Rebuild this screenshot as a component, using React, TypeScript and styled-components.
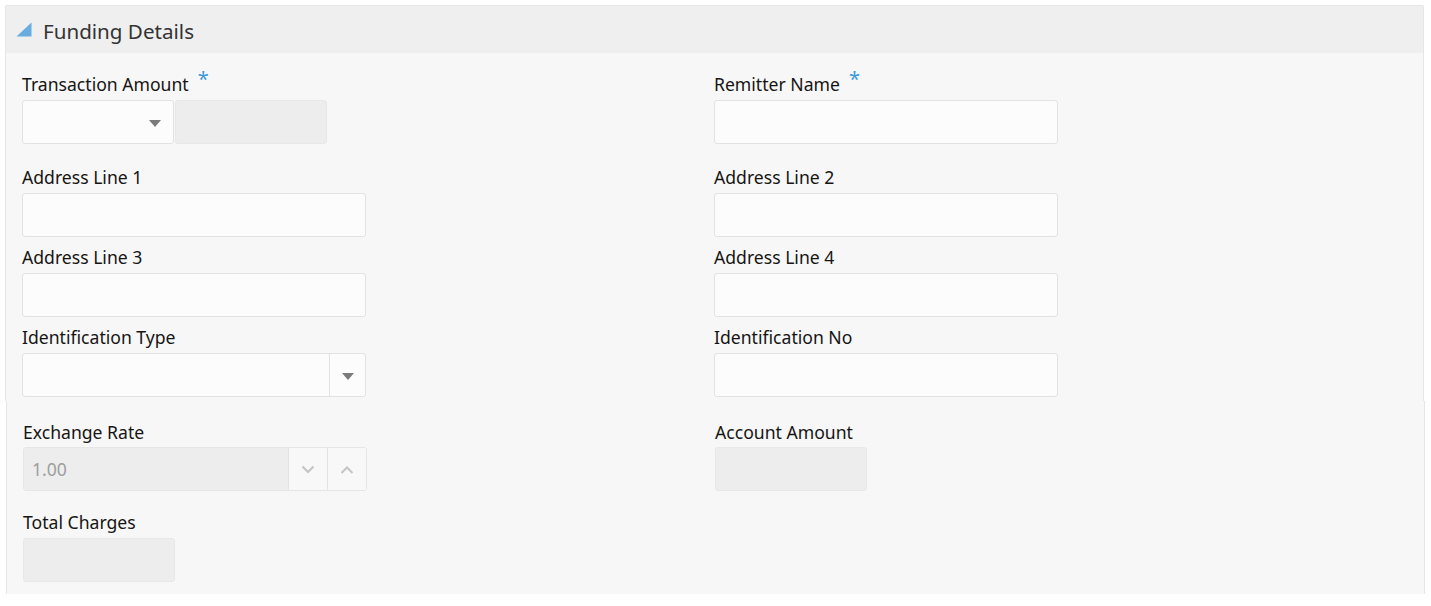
import React from "react";
import styled, { createGlobalStyle } from "styled-components";

const Global = createGlobalStyle`
  html, body { margin: 0; padding: 0; background: #ffffff; }
  body { font-family: "Noto Sans", "Open Sans", sans-serif; color: #161513; }
  * { box-sizing: border-box; }
`;

const Page = styled.div`
  padding: 5px 0 0 5px;
  width: 1431px;
`;

const Panel = styled.section`
  width: 1419px;
  border: 1px solid #e6e6e6;
  border-bottom: none;
  border-radius: 2px 2px 0 0;
  background: #f7f7f7;
`;

const Header = styled.div`
  height: 47px;
  background: #efefef;
  display: flex;
  align-items: center;
  padding-left: 11px;
  gap: 11px;
`;

const Title = styled.h2`
  margin: 0;
  font-size: 20.6px;
  font-weight: 400;
  color: #333333;
  line-height: 24px;
  margin-top: 2px;
`;

const Body = styled.div`
  padding: 20px 0 4px 16px;
`;

const Lower = styled.section`
  width: 1419px;
  margin-left: 1px;
  border-left: 1px solid #e6e6e6;
  border-right: 1px solid #e6e6e6;
  background: #f7f7f7;
  padding: 20px 0 12px 16px;
`;

const Row = styled.div<{ $after: number }>`
  display: grid;
  grid-template-columns: 692px 692px;
  margin-bottom: ${(p) => p.$after}px;
`;

const Field = styled.div`
  display: flex;
  flex-direction: column;
`;

const Label = styled.label<{ $gap?: number }>`
  font-size: 17.6px;
  line-height: 20px;
  height: 20px;
  margin-top: 1px;
  margin-bottom: ${(p) => p.$gap ?? 6}px;
  white-space: nowrap;
  display: flex;
  align-items: flex-start;
`;

const Required = styled.span`
  color: #3a9ad9;
  font-size: 20px;
  line-height: 16px;
  margin-left: 9px;
  margin-top: -3px;
`;

const Input = styled.div<{ $w: number; $disabled?: boolean }>`
  width: ${(p) => p.$w}px;
  height: 44px;
  border: 1px solid ${(p) => (p.$disabled ? "#e8e8e8" : "#e2e2e2")};
  border-radius: 3px;
  background: ${(p) => (p.$disabled ? "#ededed" : "#fcfcfc")};
`;

const Group = styled.div`
  display: flex;
  gap: 1px;
`;

const Select = styled.div<{ $w: number }>`
  width: ${(p) => p.$w}px;
  height: 44px;
  border: 1px solid #e2e2e2;
  border-radius: 3px;
  background: #fcfcfc;
  display: flex;
  justify-content: flex-end;
`;

const Trigger = styled.div<{ $divider?: boolean }>`
  width: 36px;
  display: flex;
  align-items: center;
  justify-content: center;
  border-left: ${(p) => (p.$divider ? "1px solid #e2e2e2" : "none")};
`;

const Caret = styled.span`
  width: 0;
  height: 0;
  border-left: 6px solid transparent;
  border-right: 6px solid transparent;
  border-top: 7px solid #7b7b7b;
  margin-top: 2px;
`;

const Spin = styled.div`
  width: 344px;
  height: 44px;
  border: 1px solid #e6e6e6;
  border-radius: 3px;
  display: flex;
  overflow: hidden;
`;

const SpinValue = styled.div`
  flex: 1;
  background: #ededed;
  color: #9e9e9e;
  font-size: 17.6px;
  display: flex;
  align-items: center;
  padding-left: 8px;
`;

const SpinBtn = styled.div`
  width: 39px;
  background: #f8f8f8;
  border-left: 1px solid #e2e2e2;
  display: flex;
  align-items: center;
  justify-content: center;
`;

const Chevron = ({ up }: { up?: boolean }) => (
  <svg width="14" height="9" viewBox="0 0 14 9">
    <path
      d={up ? "M1.5 8 L7 2.5 L12.5 8" : "M1.5 1.5 L7 7 L12.5 1.5"}
      fill="none"
      stroke="#c4c4c4"
      strokeWidth="2"
    />
  </svg>
);

const Collapse = () => (
  <svg width="16" height="15" viewBox="0 0 16 15" style={{ marginLeft: -1 }}>
    <polygon points="15.5,0.5 15.5,14.5 0.5,14.5" fill="#68ace0" />
  </svg>
);

export default function App() {
  return (
    <>
      <Global />
      <Page>
        <Panel>
          <Header>
            <Collapse />
            <Title>Funding Details</Title>
          </Header>
          <Body>
            <Row $after={22}>
              <Field>
                <Label>
                  Transaction Amount<Required>*</Required>
                </Label>
                <Group>
                  <Select $w={152}>
                    <Trigger>
                      <Caret />
                    </Trigger>
                  </Select>
                  <Input $w={152} $disabled />
                </Group>
              </Field>
              <Field>
                <Label>
                  Remitter Name<Required>*</Required>
                </Label>
                <Input $w={344} />
              </Field>
            </Row>
            <Row $after={9}>
              <Field>
                <Label>Address Line 1</Label>
                <Input $w={344} />
              </Field>
              <Field>
                <Label>Address Line 2</Label>
                <Input $w={344} />
              </Field>
            </Row>
            <Row $after={9}>
              <Field>
                <Label>Address Line 3</Label>
                <Input $w={344} />
              </Field>
              <Field>
                <Label>Address Line 4</Label>
                <Input $w={344} />
              </Field>
            </Row>
            <Row $after={0}>
              <Field>
                <Label>Identification Type</Label>
                <Select $w={344}>
                  <Trigger $divider>
                    <Caret />
                  </Trigger>
                </Select>
              </Field>
              <Field>
                <Label>Identification No</Label>
                <Input $w={344} />
              </Field>
            </Row>
          </Body>
        </Panel>
        <Lower>
          <Row $after={20}>
            <Field>
              <Label $gap={5}>Exchange Rate</Label>
              <Spin>
                <SpinValue>1.00</SpinValue>
                <SpinBtn>
                  <Chevron />
                </SpinBtn>
                <SpinBtn>
                  <Chevron up />
                </SpinBtn>
              </Spin>
            </Field>
            <Field>
              <Label $gap={5}>Account Amount</Label>
              <Input $w={152} $disabled />
            </Field>
          </Row>
          <Row $after={0}>
            <Field>
              <Label>Total Charges</Label>
              <Input $w={152} $disabled />
            </Field>
          </Row>
        </Lower>
      </Page>
    </>
  );
}
